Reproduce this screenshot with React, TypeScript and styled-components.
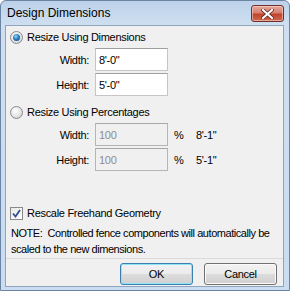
import React from "react";
import styled, { createGlobalStyle } from "styled-components";

const Global = createGlobalStyle`
  html, body { margin: 0; padding: 0; background: #ffffff; }
  body { font-family: "Liberation Sans", Arial, sans-serif; font-size: 11px; letter-spacing: -0.3px; color: #000; }
`;

const Window = styled.div`
  box-sizing: border-box;
  width: 290px;
  height: 291px;
  display: flex;
  flex-direction: column;
  border: 1px solid #6b84a3;
  border-radius: 6px 6px 0 0;
  background: linear-gradient(180deg, #bcd2ea 0px, #cfdff1 24px, #c9dcf0 100%);
  padding: 0 5px 3px 4px;
`;

const TitleBar = styled.div`
  height: 24px;
  display: flex;
  align-items: center;
  padding-left: 2px;
`;

const Title = styled.span`
  font-size: 12px;
  letter-spacing: 0;
  color: #000;
  flex: 1;
`;

const CloseButton = styled.div`
  box-sizing: border-box;
  width: 33px;
  height: 17px;
  margin-top: 1px;
  border: 1px solid #6d2f2a;
  border-radius: 3px;
  background: linear-gradient(180deg, #e5a79c 0%, #d6806f 45%, #c0432d 55%, #cf6a4f 100%);
  box-shadow: inset 0 0 0 1px rgba(255, 220, 210, 0.55);
  display: flex;
  align-items: center;
  justify-content: center;
`;

const Content = styled.div`
  flex: 1;
  display: flex;
  flex-direction: column;
  background: #f0f0f0;
  border: 1px solid #8fa4bd;
`;

const Body = styled.div`
  padding: 4px 2px 0 4px;
  display: flex;
  flex-direction: column;
`;

const OptionRow = styled.label<{ $mt?: number }>`
  display: flex;
  align-items: center;
  gap: 4px;
  height: 14px;
  margin-top: ${(p) => p.$mt ?? 0}px;
`;

const Radio = styled.span<{ $checked?: boolean }>`
  box-sizing: border-box;
  width: 13px;
  height: 13px;
  border-radius: 50%;
  border: 1px solid #8a8a8a;
  background: radial-gradient(circle at 40% 35%, #ffffff 0%, #e4e4e4 55%, #c9c9c9 100%);
  display: flex;
  align-items: center;
  justify-content: center;
  &::after {
    content: "";
    display: ${(p) => (p.$checked ? "block" : "none")};
    width: 7px;
    height: 7px;
    border-radius: 50%;
    background: radial-gradient(circle at 40% 35%, #9fd6f5 0%, #2a7fc4 45%, #0b3f73 100%);
  }
`;

const Check = styled.span`
  box-sizing: border-box;
  width: 13px;
  height: 13px;
  border: 1px solid #8a8a8a;
  background: linear-gradient(135deg, #e8e8e8, #ffffff);
  display: flex;
  align-items: center;
  justify-content: center;
`;

const FieldGrid = styled.div<{ $mt: number }>`
  display: grid;
  grid-template-columns: 79px 73px 16px auto;
  grid-auto-rows: 23px;
  column-gap: 6px;
  row-gap: 2px;
  margin-top: ${(p) => p.$mt}px;
  align-items: center;
`;

const FieldLabel = styled.span`
  text-align: right;
`;

const Input = styled.div<{ $disabled?: boolean }>`
  box-sizing: border-box;
  height: 23px;
  border: 1px solid ${(p) => (p.$disabled ? "#b5b5b5" : "#c5c5c5")};
  border-top-color: ${(p) => (p.$disabled ? "#a8a8a8" : "#9f9f9f")};
  background: ${(p) => (p.$disabled ? "#f0f0f0" : "#ffffff")};
  color: ${(p) => (p.$disabled ? "#8d8d8d" : "#000")};
  padding: 0 3px;
  display: flex;
  align-items: center;
`;

const Unit = styled.span``;

const Result = styled.span``;

const Note = styled.p`
  margin: 5px 0 0 1px;
  line-height: 16px;
  letter-spacing: -0.45px;
  white-space: nowrap;
`;

const Footer = styled.div`
  margin-top: 1px;
  border-top: 1px solid #dadada;
  display: flex;
  justify-content: flex-end;
  gap: 11px;
  padding: 4px 6px 0 0;
`;

const Button = styled.button<{ $default?: boolean }>`
  box-sizing: border-box;
  width: 73px;
  height: 22px;
  font-family: "Liberation Sans", Arial, sans-serif;
  font-size: 11px;
  letter-spacing: -0.3px;
  color: #000;
  border-radius: 3px;
  border: 1px solid ${(p) => (p.$default ? "#3c7fb1" : "#707070")};
  background: linear-gradient(180deg, #f2f2f2 0%, #ebebeb 50%, #dddddd 51%, #cfcfcf 100%);
  box-shadow: inset 0 0 0 1px ${(p) => (p.$default ? "#8ee4f8" : "#fbfbfb")};
  padding: 0;
`;

export default function App() {
  return (
    <>
      <Global />
      <Window>
        <TitleBar>
          <Title>Design Dimensions</Title>
          <CloseButton>
            <svg width="13" height="10" viewBox="0 0 13 10">
              <path d="M2 1 L11 9 M11 1 L2 9" stroke="#5a2018" strokeWidth="3.6" strokeLinecap="square" />
              <path d="M2 1 L11 9 M11 1 L2 9" stroke="#ffffff" strokeWidth="2.2" strokeLinecap="square" />
            </svg>
          </CloseButton>
        </TitleBar>
        <Content>
          <Body>
            <OptionRow>
              <Radio $checked />
              <span>Resize Using Dimensions</span>
            </OptionRow>
            <FieldGrid $mt={4}>
              <FieldLabel>Width:</FieldLabel>
              <Input>8'-0"</Input>
              <Unit />
              <Result />
              <FieldLabel>Height:</FieldLabel>
              <Input>5'-0"</Input>
              <Unit />
              <Result />
            </FieldGrid>
            <OptionRow $mt={9}>
              <Radio />
              <span>Resize Using Percentages</span>
            </OptionRow>
            <FieldGrid $mt={4}>
              <FieldLabel>Width:</FieldLabel>
              <Input $disabled>100</Input>
              <Unit>%</Unit>
              <Result>8'-1"</Result>
              <FieldLabel>Height:</FieldLabel>
              <Input $disabled>100</Input>
              <Unit>%</Unit>
              <Result>5'-1"</Result>
            </FieldGrid>
            <OptionRow $mt={35}>
              <Check>
                <svg width="9" height="9" viewBox="0 0 9 9">
                  <path d="M1 4.5 L3.5 7.5 L8 1" fill="none" stroke="#2f4f8f" strokeWidth="1.8" />
                </svg>
              </Check>
              <span>Rescale Freehand Geometry</span>
            </OptionRow>
            <Note>
              NOTE:&nbsp; Controlled fence components will automatically be
              <br />
              scaled to the new dimensions.
            </Note>
          </Body>
          <Footer>
            <Button $default>OK</Button>
            <Button>Cancel</Button>
          </Footer>
        </Content>
      </Window>
    </>
  );
}
